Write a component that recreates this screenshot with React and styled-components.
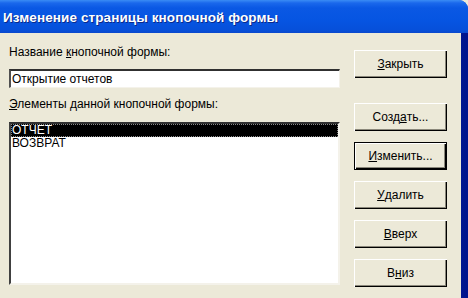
import React from 'react';
import styled, { createGlobalStyle } from 'styled-components';

const GlobalStyle = createGlobalStyle`
  html, body {
    margin: 0;
    padding: 0;
    background: #ece9d8;
    overflow: hidden;
  }
`

const items = ['ОТЧЕТ', 'ВОЗВРАТ'];

const buttons = [
  { pre: '', key: 'З', post: 'акрыть', top: 17 },
  { pre: 'Созд', key: 'а', post: 'ть...', top: 25 },
  { pre: '', key: 'И', post: 'зменить...', isDefault: true },
  { pre: '', key: 'У', post: 'далить' },
  { pre: '', key: 'В', post: 'верх' },
  { pre: 'В', key: 'н', post: 'из' },
];

export default function App() {
  return (
    <>
      <GlobalStyle />
      <Window>
        <TitleBar>
          <TitleText>Изменение страницы кнопочной формы</TitleText>
        </TitleBar>
        <Frame>
          <Body>
            <LeftPane>
              <Label>Название <u>к</u>нопочной формы:</Label>
              <TextBox>Открытие отчетов</TextBox>
              <Label>
                <u>Э</u>лементы данной кнопочной формы:
              </Label>
              <ListBox>
                {items.map((item, i) => (
                  <ListItem key={item} selected={i === 0}>
                    {item}
                  </ListItem>
                ))}
              </ListBox>
            </LeftPane>
            <ButtonColumn>
              {buttons.map((b) => (
                <Button key={b.pre + b.key + b.post} $top={b.top} $default={b.isDefault}>
                  {b.pre}
                  <u>{b.key}</u>
                  {b.post}
                </Button>
              ))}
            </ButtonColumn>
          </Body>
        </Frame>
      </Window>
    </>
  )
}

const Window = styled.div`
  width: 468px;
  height: 298px;
  display: flex;
  flex-direction: column;
  background: #0a50dc;
  border-top-right-radius: 9px;
  overflow: hidden;
  font-family: "Liberation Sans", Arial, sans-serif;
`

const TitleBar = styled.div`
  height: 33px;
  flex-shrink: 0;
  display: flex;
  align-items: center;
  padding-left: 3px;
  background: linear-gradient(
    to bottom,
    #3a8cf5 0px,
    #1a68ec 3px,
    #0a58e4 8px,
    #0655e2 20px,
    #0650da 30px,
    #0a48cc 33px
  );
`

const TitleText = styled.span`
  color: #fff;
  font-size: 13.5px;
  font-weight: bold;
  letter-spacing: 0.1px;
  padding-top: 2px;
  text-shadow: 1px 1px 0 #0a2a8a;
`

const Frame = styled.div`
  flex: 1;
  display: flex;
  padding-right: 7px;
  background: linear-gradient(to right, #0650e0 0, #0a48d4 70%, #00138c 100%);
`

const Body = styled.div`
  flex: 1;
  display: flex;
  background: #ece9d8;
`

const LeftPane = styled.div`
  width: 331px;
  padding: 12px 0 0 9px;
  display: flex;
  flex-direction: column;
`

const Label = styled.div`
  font-size: 12px;
  line-height: 14px;
  color: #000;
  margin-bottom: 10px;
`

const TextBox = styled.div`
  height: 19px;
  box-sizing: border-box;
  background: #fff;
  border-top: 2px solid #303030;
  border-left: 2px solid #505050;
  border-right: 1px solid #f4f2ea;
  border-bottom: 1px solid #f4f2ea;
  font-size: 12px;
  line-height: 16px;
  padding-left: 1px;
  margin-bottom: 9px;
`

const ListBox = styled.div`
  height: 163px;
  box-sizing: border-box;
  margin-top: 1px;
  background: #fff;
  border-top: 2px solid #303030;
  border-left: 2px solid #404040;
  border-right: 2px solid #f4f2ea;
  border-bottom: 2px solid #f4f2ea;
`

const ListItem = styled.div`
  font-size: 12px;
  line-height: 13px;
  padding: 0 1px;
  color: ${(p) => (p.selected ? '#fff' : '#000')};
  background: ${(p) => (p.selected ? '#000' : 'transparent')};
  outline: ${(p) => (p.selected ? '1px dotted #888' : 'none')};
  outline-offset: -1px;
`

const ButtonColumn = styled.div`
  padding: 0 0 0 14px;
  display: flex;
  flex-direction: column;
  gap: 11px;
`

const Button = styled.div`
  width: 93px;
  height: 28px;
  box-sizing: border-box;
  margin-top: ${(p) => (p.$top ? p.$top - 11 : 0)}px;
  display: flex;
  align-items: center;
  justify-content: center;
  font-size: 12px;
  color: #000;
  background: #ece9d8;
  border: ${(p) => (p.$default ? '1px solid #000' : 'none')};
  box-shadow: inset 1px 1px 0 #fff, inset -1px -1px 0 #000, inset -2px -2px 0 #8a877a;
  &:first-child {
    margin-top: 17px;
  }
`
